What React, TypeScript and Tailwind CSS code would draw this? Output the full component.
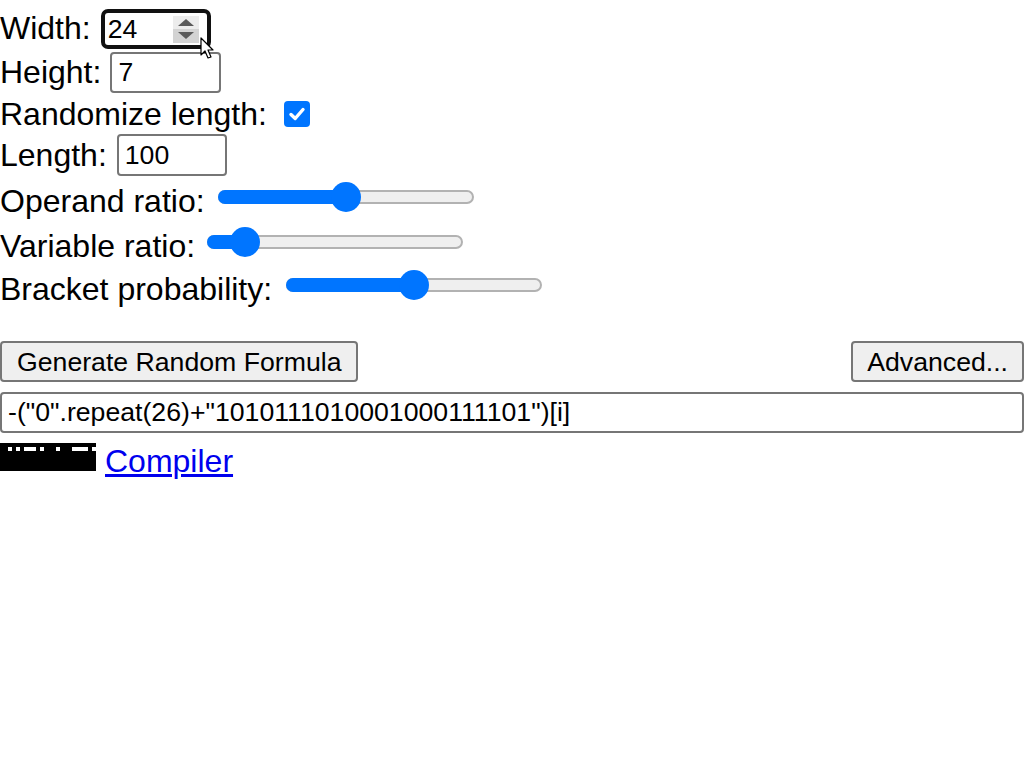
import React from "react";

const FORMULA = '-("0".repeat(26)+"1010111010001000111101")[i]';
const BITS = "00" + "1010111010001000111101";

type SliderProps = { value: number; gap: string; rowClass: string; label: string };

const Slider = (props: SliderProps) => {
  const travel = 256 - 30;
  const thumbLeft = Math.round(props.value * travel);
  return (
    <div className={`flex items-center ${props.rowClass}`}>
      <span className="whitespace-nowrap">{props.label}</span>
      <div className={`relative h-[30px] w-[256px] mb-[8px] ${props.gap}`}>
        <div className="absolute left-0 right-0 top-[8px] h-[14px] rounded-full bg-[#efefef] border-[2px] border-[#b2b2b2]"></div>
        <div
          className="absolute left-0 top-[8px] h-[14px] rounded-full bg-[#0075ff]"
          style={{ width: thumbLeft + 15 }}
        ></div>
        <div
          className="absolute top-0 h-[30px] w-[30px] rounded-full bg-[#0075ff]"
          style={{ left: thumbLeft }}
        ></div>
      </div>
    </div>
  );
};

const Cursor = () => (
  <svg className="absolute left-[95px] top-[24px]" width="16" height="24" viewBox="0 0 16 24">
    <path d="M1 1 L1 18 L5 14 L8 21 L11 20 L8 13 L13 13 Z" fill="#fff" stroke="#000" strokeWidth="1.2" strokeLinejoin="round" />
  </svg>
);

const BitCanvas = () => (
  <svg width="96" height="28" viewBox="0 0 96 28" className="block shrink-0">
    <rect x="0" y="0" width="96" height="28" fill="#000" />
    {BITS.split("").map((b, i) =>
      b === "1" ? <rect key={i} x={i * 4} y={4} width="4" height="4" fill="#fff" /> : null
    )}
  </svg>
);

export default function App() {
  return (
    <div className="min-h-[768px] w-[1024px] bg-white font-['Liberation_Sans',Arial,sans-serif] text-[32px] leading-[37px] text-black">
      <div className="pt-[6px]">
        <div className="flex h-[45px] items-center">
          <span>Width:</span>
          <div className="relative ml-[10px] h-[40px] w-[110px] rounded-[7px] border-[4px] border-[#111] bg-white">
            <span className="absolute left-[3px] top-[1px] text-[26.67px] leading-[31px]">24</span>
            <div className="absolute right-[8px] top-[3px] flex h-[27px] w-[26px] flex-col">
              <div className="flex h-1/2 items-center justify-center bg-[#ececec]">
                <div className="h-0 w-0 border-x-[8px] border-b-[7px] border-x-transparent border-b-[#5a5a5a]"></div>
              </div>
              <div className="flex h-1/2 items-center justify-center bg-[#d3d3d3]">
                <div className="h-0 w-0 border-x-[8px] border-t-[7px] border-x-transparent border-t-[#5a5a5a]"></div>
              </div>
            </div>
            <Cursor />
          </div>
        </div>
        <div className="flex h-[42px] items-center">
          <span>Height:</span>
          <div className="ml-[9px] flex h-[41px] w-[111px] items-center rounded-[4px] border-[2px] border-[#767676] bg-white pl-[6px] text-[26.67px]">
            7
          </div>
        </div>
        <div className="flex h-[42px] items-center">
          <span>Randomize length:</span>
          <div className="ml-[17px] mb-[1px] flex h-[26px] w-[26px] items-center justify-center rounded-[4px] bg-[#0075ff]">
            <svg width="18" height="18" viewBox="0 0 18 18">
              <path d="M3 9.5 L7.2 13.5 L15 4.5" fill="none" stroke="#fff" strokeWidth="3.4" strokeLinecap="round" strokeLinejoin="round" />
            </svg>
          </div>
        </div>
        <div className="flex h-[40px] items-center">
          <span>Length:</span>
          <div className="ml-[10px] flex h-[42px] w-[110px] items-center rounded-[4px] border-[2px] border-[#767676] bg-white pl-[6px] text-[26.67px]">
            100
          </div>
        </div>
        <Slider label="Operand ratio:" value={0.5} gap="ml-[13px]" rowClass="h-[52px]" />
        <Slider label="Variable ratio:" value={0.1} gap="ml-[12px]" rowClass="h-[38px]" />
        <Slider label="Bracket probability:" value={0.5} gap="ml-[14px]" rowClass="h-[48px]" />
      </div>

      <div className="mt-[28px] flex items-center justify-between">
        <button className="h-[41px] rounded-[4px] border-[2px] border-[#767676] bg-[#efefef] px-[15px] text-[26.67px] leading-[30px]">
          Generate Random Formula
        </button>
        <button className="h-[41px] rounded-[4px] border-[2px] border-[#767676] bg-[#efefef] px-[14px] text-[26.67px] leading-[30px]">
          Advanced...
        </button>
      </div>

      <div className="mt-[10px] flex h-[41px] w-[1024px] items-center rounded-[4px] border-[2px] border-[#767676] bg-white pl-[6px] text-[26.67px] whitespace-nowrap">
        {FORMULA}
      </div>

      <div className="mt-[10px] flex items-end gap-[9px]">
        <BitCanvas />
        <a href="#" className="text-[#0000ee] underline leading-[30px] mb-[-5px]">
          Compiler
        </a>
      </div>
    </div>
  );
}
